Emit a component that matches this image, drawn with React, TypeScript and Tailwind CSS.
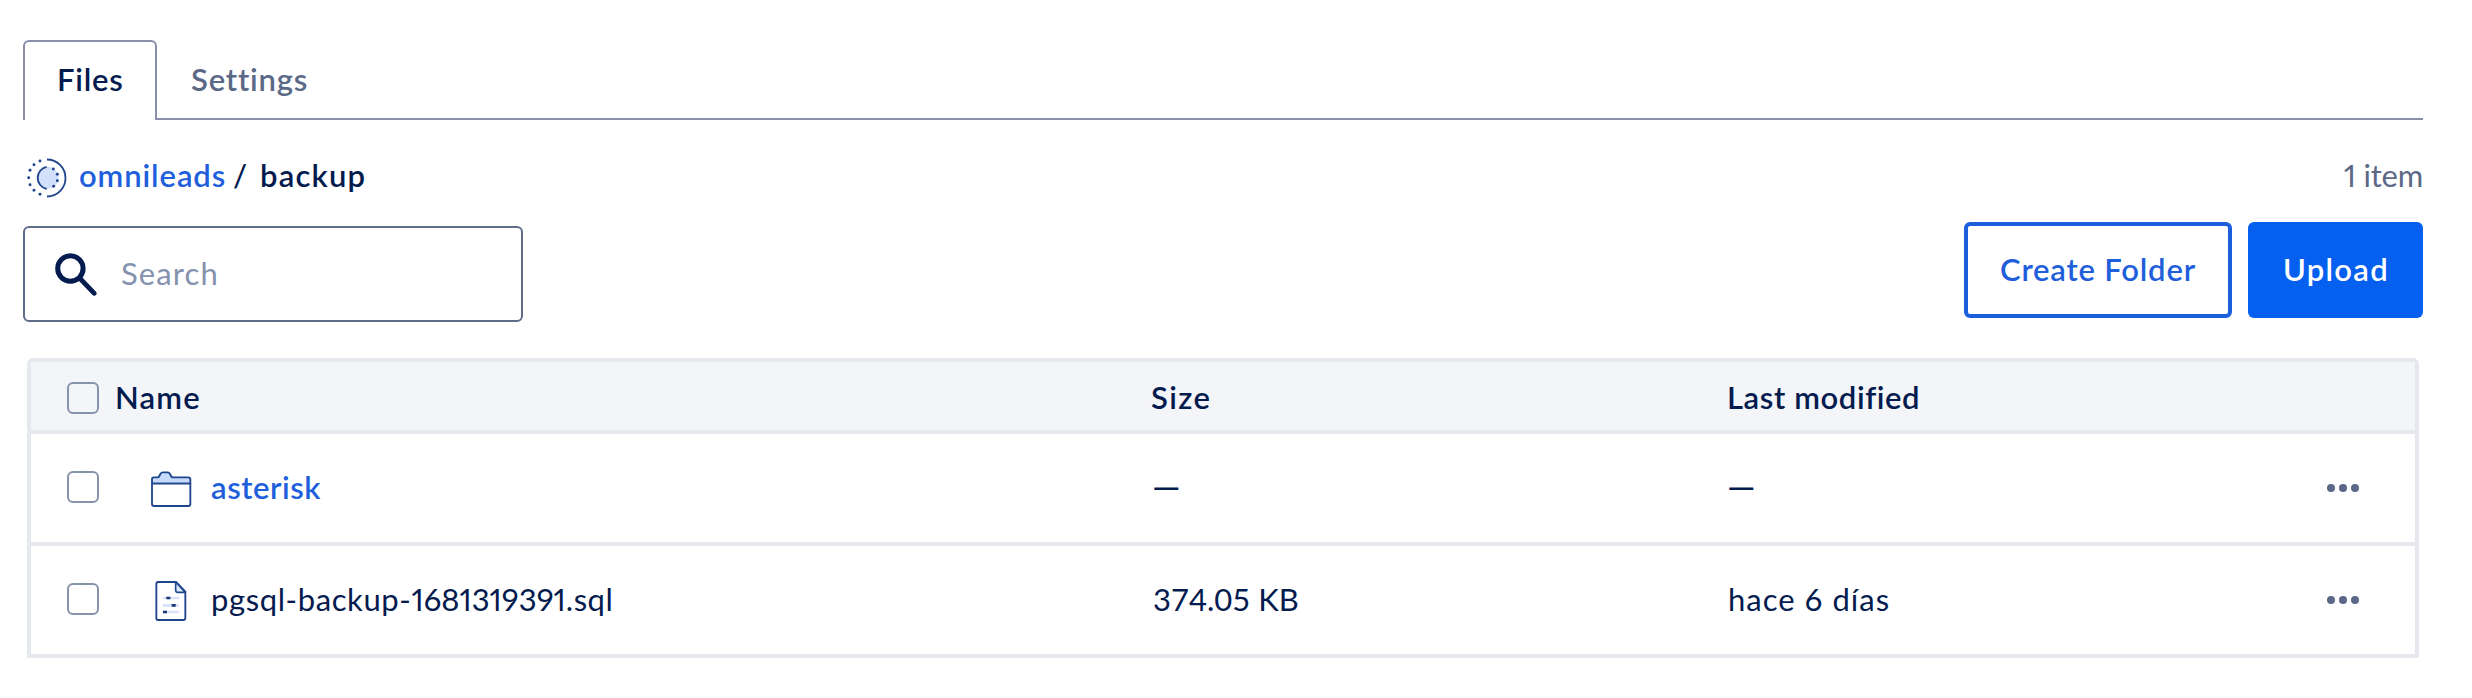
function BucketIcon() {
  const outer = [[60, 33], [42, 44], [30, 61], [26, 83], [30, 104], [42, 121], [60, 133]];
  const inner = [[100, 57], [112, 73], [112, 92], [101, 109]];
  return (
    <svg className="mt-px h-[42px] w-[42px] shrink-0" viewBox="21 21 126 126" fill="none">
      <circle cx="83" cy="83" r="33" fill="#d2e0fb" />
      <path d="M81 28.5a55.5 55.5 0 0 1 0 111" stroke="#1f468c" strokeWidth="5.5" />
      <path d="M80 50.5a34 34 0 0 0 0 66.5" stroke="#1f468c" strokeWidth="5.5" />
      {[...outer, ...inner].map(([x, y]) => (
        <circle key={`${x}-${y}`} cx={x} cy={y} r="4.4" fill="#1f468c" />
      ))}
    </svg>
  );
}

function FolderIcon() {
  return (
    <svg className="block h-[38px] w-[42px]" viewBox="30 30 126 114" fill="none" stroke="#1f468c" strokeWidth="5.5" strokeLinejoin="round">
      <path d="M36 71V57q0-5 5-5h12q3 0 5-4l3-6q3-5 8-5h14q5 0 7 5l3 6q2 4 5 4h47q6 0 6 6v13z" fill="#c6dafc" />
      <path d="M36 71v61q0 6 6 6h103q6 0 6-6V71z" fill="#fff" />
    </svg>
  );
}

function FileIcon() {
  return (
    <svg className="block h-[42px] w-[34px]" viewBox="42 360 102 126" fill="none">
      <path d="M54 366h54l28 29v79q0 6-6 6H54q-5 0-5-6v-102q0-6 5-6z" fill="#fff" stroke="#1f468c" strokeWidth="5.5" strokeLinejoin="round" />
      <path d="M107 366v25q0 6 6 6h23z" fill="#e0eafd" stroke="#1f468c" strokeWidth="5" strokeLinejoin="round" />
      <path d="M69 414h48M69 436h48M69 456h48" stroke="#d9e2f8" strokeWidth="8" />
      <path d="M79 414h12M95 436h12M69 456h12" stroke="#16387a" strokeWidth="8" />
    </svg>
  );
}

function SearchIcon() {
  return (
    <svg className="mb-[-2px] ml-[30px] h-[48px] w-[48px]" viewBox="0 0 48 48" fill="none" stroke="#031b4e" strokeLinecap="round">
      <circle cx="15.4" cy="18.5" r="12.7" strokeWidth="5" />
      <path d="M25 28.5 39.3 43.3" strokeWidth="4.8" />
    </svg>
  );
}

function Checkbox() {
  return <span className="block h-8 w-8 shrink-0 rounded-md border-2 border-[#8792ac]" />;
}

function Dots() {
  return (
    <span className="ml-auto mr-[56px] flex gap-1">
      <i className="h-2 w-2 rounded-full bg-[#5b6987]" />
      <i className="h-2 w-2 rounded-full bg-[#5b6987]" />
      <i className="h-2 w-2 rounded-full bg-[#5b6987]" />
    </span>
  );
}

export default function App() {
  return (
    <div className="h-[698px] w-[2472px] overflow-hidden bg-white pl-[23px] pt-10 font-['Lato',sans-serif] text-[31px] leading-9 text-[#031b4e]">
      <div className="w-[2400px]">
        <div className="flex h-20">
          <div className="flex w-[134px] items-center rounded-t-md border-2 border-b-0 border-[#8b8fa9] pb-1 pl-[32px] font-semibold">
            <span className="tracking-[0.8px]">Files</span>
          </div>
          <div className="flex flex-1 items-center border-b-2 border-[#8b8fa9] pl-[34px] font-semibold text-[#5b6987]">
            <span className="tracking-[0.8px]">Settings</span>
          </div>
        </div>

        <div className="flex h-[102px] items-start pl-1 pt-9">
          <BucketIcon />
          <span className="ml-[10px] mt-px w-[155px] font-semibold tracking-[0.9px] text-[#1f5fdc]">omnileads</span>
          <span className="-ml-px mt-px w-[26px] font-medium">/</span>
          <span className="ml-px mt-px font-semibold tracking-[1.2px]">backup</span>
          <span className="ml-auto mt-px proportional-nums tracking-[-0.2px] text-[#5b6987]">1 item</span>
        </div>

        <div className="flex h-[100px] items-start">
          <div className="mt-1 flex h-24 w-[500px] items-center rounded-md border-2 border-[#5f6c8a] pb-[2px]">
            <SearchIcon />
            <span className="ml-[18px] tracking-[1.1px] text-[#8592ad]">Search</span>
          </div>
          <div className="ml-auto flex h-24 w-[268px] items-center justify-center rounded-md border-4 border-[#1b5fdd] pb-[2px] font-semibold text-[#1f5fdc]">
            <span className="tracking-[0.8px]">Create Folder</span>
          </div>
          <div className="ml-4 flex h-24 w-[175px] items-center justify-center rounded-md bg-[#0560f0] pb-[2px] pl-px font-semibold text-white">
            <span className="tracking-[1.3px]">Upload</span>
          </div>
        </div>

        <div className="ml-1 mt-9 w-[2392px] rounded-t-md border-4 border-[#e5e8ed]">
          <div className="grid h-[72px] grid-cols-[1084px_576px_1fr] items-center border-b-4 border-[#e5e8ed] bg-[#f3f5f9] pl-9 font-semibold">
            <div className="flex items-center">
              <span className="mt-1"><Checkbox /></span>
              <span className="ml-4 mt-0.5 tracking-[1.2px]">Name</span>
            </div>
            <span className="mt-0.5 tracking-[1.4px]">Size</span>
            <span className="mt-0.5 tracking-[0.6px]">Last modified</span>
          </div>
          <div className="grid h-28 grid-cols-[1084px_576px_1fr] items-center border-b-4 border-[#e5e8ed] pl-9">
            <div className="flex items-center">
              <span className="-mt-0.5"><Checkbox /></span>
              <span className="ml-[51px] mt-0.5"><FolderIcon /></span>
              <span className="-mt-0.5 ml-[19px] font-semibold tracking-[0.55px] text-[#1f5fdc]">asterisk</span>
            </div>
            <span className="-mt-1 pl-px text-[36px]">—</span>
            <div className="flex items-center">
              <span className="-mt-1 text-[36px]">—</span>
              <Dots />
            </div>
          </div>
          <div className="grid h-[108px] grid-cols-[1084px_576px_1fr] items-center pl-9">
            <div className="flex items-center">
              <span className="-mt-0.5"><Checkbox /></span>
              <span className="ml-[55px] mt-0.5"><FileIcon /></span>
              <span className="-mt-0.5 ml-[23px] flex proportional-nums">
                <span className="tracking-[0.6px]">pgsql-backup-</span>
                <span>1681319391</span>
                <span className="tracking-[0.5px]">.sql</span>
              </span>
            </div>
            <span className="-mt-0.5 pl-[2px]">374.05 KB</span>
            <div className="flex items-center">
              <span className="-mt-0.5 ml-px tracking-[1px]">hace 6 días</span>
              <Dots />
            </div>
          </div>
        </div>
      </div>
    </div>
  );
}
